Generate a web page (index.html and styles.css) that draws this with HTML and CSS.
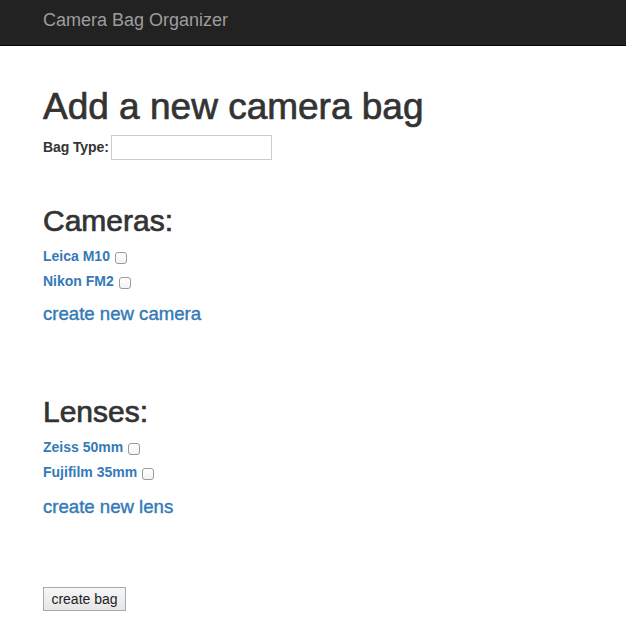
FILE: index.html
```html
<!DOCTYPE html>
<html>
<head>
<meta charset="utf-8">
<link rel="stylesheet" href="styles.css">
</head>
<body>
<nav class="navbar">
  <div class="nav-inner"><span class="brand">Camera Bag Organizer</span></div>
</nav>
<main class="container">
  <h1 class="title">Add a new camera bag</h1>
  <div class="field">
    <label class="label">Bag Type:</label>
    <input class="input" type="text">
  </div>

  <h2 class="section">Cameras:</h2>
  <div class="list">
    <div class="item"><a class="item-link" href="#">Leica M10</a><input type="checkbox" class="check"></div>
    <div class="item"><a class="item-link" href="#">Nikon FM2</a><input type="checkbox" class="check"></div>
  </div>
  <a class="create" href="#">create new camera</a>

  <h2 class="section lenses">Lenses:</h2>
  <div class="list">
    <div class="item"><a class="item-link" href="#">Zeiss 50mm</a><input type="checkbox" class="check"></div>
    <div class="item"><a class="item-link" href="#">Fujifilm 35mm</a><input type="checkbox" class="check"></div>
  </div>
  <a class="create create-lens" href="#">create new lens</a>

  <div class="actions"><button class="btn">create bag</button></div>
</main>
</body>
</html>
```
FILE: styles.css
```css
* { box-sizing: border-box; }
body {
  margin: 0;
  font-family: "Liberation Sans", Arial, sans-serif;
  font-size: 14px;
  color: #333;
  background: #fff;
}
.navbar {
  background: #222;
  border-bottom: 1px solid #080808;
  height: 46px;
}
.nav-inner {
  padding: 10px 43px 0;
  line-height: 20px;
}
.brand {
  color: #9d9d9d;
  font-size: 18px;
}
.container {
  padding: 0 43px;
}
.title {
  font-size: 37px;
  font-weight: normal;
  line-height: 40px;
  margin: 41px 0 8px;
  color: #333;
  -webkit-text-stroke: 0.7px #333;
}
.field {
  display: flex;
  align-items: center;
  gap: 2px;
  height: 25px;
}
.label {
  font-weight: bold;
  font-size: 14px;
  line-height: 16px;
  margin-bottom: 2px;
  letter-spacing: -0.1px;
}
.input {
  width: 161px;
  height: 25px;
  border: 1px solid #ccc;
  margin: 0;
  padding: 2px 4px;
  font: inherit;
  background: #fff;
}
.section {
  font-size: 30px;
  font-weight: normal;
  line-height: 33px;
  margin: 44px 0 7px;
  color: #333;
  -webkit-text-stroke: 0.7px #333;
}
.lenses { margin-top: 69px; }
.item {
  display: flex;
  align-items: center;
  height: 25px;
  line-height: 25px;
}
.item-link {
  color: #337ab7;
  font-weight: bold;
  font-size: 14px;
  text-decoration: none;
}
.check {
  appearance: none;
  -webkit-appearance: none;
  margin: 2px 0 0 5px;
  width: 12px;
  height: 12px;
  border: 1px solid #9a9a9a;
  border-radius: 3px;
  background: linear-gradient(#fff, #f3f3f3);
}
.create {
  display: block;
  color: #337ab7;
  font-size: 18.6px;
  line-height: 24px;
  text-decoration: none;
  margin-top: 8px;
  -webkit-text-stroke: 0.4px #337ab7;
}
.create-lens { margin-top: 10px; }
.actions { margin-top: 68px; }
.btn {
  font: inherit;
  font-size: 14px;
  color: #222;
  background: linear-gradient(#f6f6f6, #e6e6e6);
  border: 1px solid #a9a9a9;
  border-radius: 0;
  height: 24px;
  width: 83px;
  padding: 0;
}
```
